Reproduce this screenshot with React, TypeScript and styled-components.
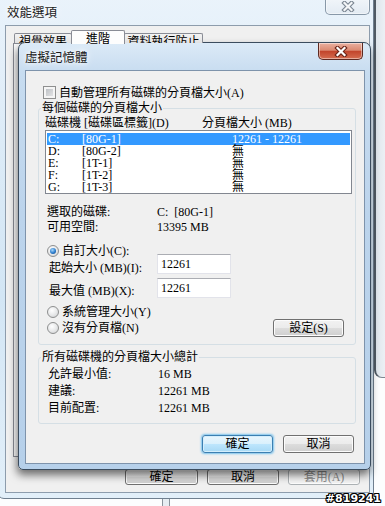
import React from "react";
import styled, { createGlobalStyle } from "styled-components";

const GlobalStyle = createGlobalStyle`
  html, body {
    margin: 0;
    padding: 0;
    background: #fcfdfe;
  }
  * { box-sizing: border-box; }
`;

const SERIF = `"Liberation Serif", "Noto Sans CJK TC", serif`;
const SANS = `"Noto Sans CJK TC", "Noto Sans", sans-serif`;

const Desktop = styled.div`
  position: relative;
  width: 385px;
  height: 506px;
  overflow: hidden;
  background: #fcfdfe;
  font-family: ${SERIF};
  font-size: 12px;
  line-height: 12px;
  color: #000;
`;

// window further behind, only its edge shows on the right
const FarWindowEdge = styled.div`
  position: absolute;
  left: 374px;
  top: -10px;
  width: 30px;
  height: 388px;
  border-left: 2px solid #4f5963;
  border-bottom: 1px solid #7d8790;
  border-bottom-left-radius: 8px;
  background: linear-gradient(90deg, #dfe6ec, #f7f9fb 60%);
`;

const DesktopSliver = styled.div`
  position: absolute;
  left: 162px;
  top: 498px;
  width: 8px;
  height: 12px;
  border-left: 1px solid #8a949c;
  border-right: 1px solid #8a949c;
  background: #e6edf2;
`;

const BackWindow = styled.div`
  position: absolute;
  left: -3px;
  top: -8px;
  width: 377px;
  height: 507px;
  border: 1px solid #6f7f8f;
  border-radius: 7px;
  background: linear-gradient(180deg, #eaf3fb 0%, #dcebf7 30%, #d3e6f5 60%, #e2eff9 100%);
  padding: 0 3px 5px 7px;
  display: flex;
  flex-direction: column;
`;

const TitleBar = styled.div<{ $height: number }>`
  height: ${p => p.$height}px;
  display: flex;
  align-items: flex-start;
  flex-shrink: 0;
`;

const TitleText = styled.div<{ $top: number; $left: number }>`
  padding-top: ${p => p.$top}px;
  padding-left: ${p => p.$left}px;
  font-family: ${SANS};
  font-size: 12.5px;
  line-height: 13px;
  color: #1b1b1b;
  text-shadow: 0 0 4px #fff, 0 0 8px #fff;
`;

const CloseButton = styled.div<{ $active?: boolean; $height: number; $right: number }>`
  margin-left: auto;
  margin-right: ${p => p.$right}px;
  width: 45px;
  height: ${p => p.$height}px;
  display: flex;
  align-items: flex-end;
  justify-content: center;
  padding-bottom: 2px;
  border: 1px solid ${p => (p.$active ? "#5d2a22" : "#8898a8")};
  border-top: none;
  border-radius: 0 0 5px 5px;
  background: ${p =>
    p.$active
      ? "linear-gradient(180deg, #eab0a0 0%, #db8a72 45%, #c2452c 52%, #d56d50 100%)"
      : "linear-gradient(180deg, #f6f9fc, #e3ebf3)"};
  box-shadow: inset 0 0 0 1px rgba(255, 255, 255, 0.45);
`;

const CloseGlyph = ({ fill, stroke }: { fill: string; stroke: string }) => (
  <svg width="14" height="11" viewBox="0 0 14 11">
    <path d="M3.5 2 L10.5 9 M10.5 2 L3.5 9" stroke={stroke} strokeWidth="4.4" strokeLinecap="square" />
    <path d="M3.5 2 L10.5 9 M10.5 2 L3.5 9" stroke={fill} strokeWidth="2.2" strokeLinecap="square" />
  </svg>
);

const BackClient = styled.div`
  flex: 1;
  background: #f0f0f0;
  border: 1px solid #8d9cac;
  padding: 5px 9px 0 7px;
  display: flex;
  flex-direction: column;
`;

const TabStrip = styled.div`
  display: flex;
  align-items: flex-end;
  height: 12px;
  padding-left: 2px;
  position: relative;
  z-index: 1;
`;

const Tab = styled.div<{ $selected?: boolean; $width: number }>`
  width: ${p => p.$width}px;
  height: ${p => (p.$selected ? 14 : 10)}px;
  margin-bottom: ${p => (p.$selected ? -1 : 0)}px;
  margin-left: -1px;
  border: 1px solid #898c95;
  border-bottom: none;
  border-radius: 2px 2px 0 0;
  background: ${p => (p.$selected ? "#fdfdfd" : "linear-gradient(180deg, #f3f3f3, #e2e2e2)")};
  text-align: center;
  padding-top: 2px;
  white-space: nowrap;
  overflow: hidden;
`;

const TabPanel = styled.div`
  height: 414px;
  border: 1px solid #898c95;
  background: #fdfdfd;
`;

const ButtonRow = styled.div<{ $top: number; $gap: number; $right: number }>`
  display: flex;
  justify-content: flex-end;
  gap: ${p => p.$gap}px;
  margin-top: ${p => p.$top}px;
  margin-right: ${p => p.$right}px;
`;

const Button = styled.div<{ $width: number; $height: number; $default?: boolean; $disabled?: boolean }>`
  width: ${p => p.$width}px;
  height: ${p => p.$height}px;
  display: flex;
  align-items: center;
  justify-content: center;
  border: 1px solid ${p => (p.$default ? "#3c7fb1" : p.$disabled ? "#adb2b5" : "#707070")};
  border-radius: 3px;
  background: ${p =>
    p.$default
      ? "linear-gradient(180deg, #eaf6fd 0%, #d9f0fc 50%, #bee6fd 50%, #a7d9f5 100%)"
      : p.$disabled
      ? "#f4f4f4"
      : "linear-gradient(180deg, #f2f2f2 0%, #ebebeb 50%, #dddddd 50%, #cfcfcf 100%)"};
  box-shadow: ${p => (p.$default ? "0 0 2px 1px #7cc4ee, inset 0 0 0 1px #d4eefc" : "inset 0 0 0 1px #fcfcfc")};
  color: ${p => (p.$disabled ? "#8a8a8a" : "#000")};
  font-family: ${SERIF};
  font-size: 12px;
  line-height: 12px;
`;

const Dialog = styled.div`
  position: absolute;
  left: 18px;
  top: 42px;
  width: 353px;
  height: 428px;
  border: 1px solid #3b4c5e;
  border-radius: 7px 7px 5px 5px;
  background: linear-gradient(180deg, #dceaf7 0%, #c7dcf0 7%, #bcd4ec 40%, #b6d0ea 100%);
  box-shadow: -1px 5px 9px rgba(0, 0, 0, 0.55);
  padding: 0 5px 5px 6px;
  display: flex;
  flex-direction: column;
`;

const Client = styled.div`
  flex: 1;
  background: #f0f0f0;
  border: 1px solid #7e93ab;
  padding: 0 8px 0 12px;
  display: flex;
  flex-direction: column;
`;

const OptionRow = styled.div<{ $top: number; $left: number; $height?: number }>`
  display: flex;
  align-items: center;
  gap: 3px;
  height: ${p => p.$height ?? 12}px;
  margin-top: ${p => p.$top}px;
  margin-left: ${p => p.$left}px;
  white-space: nowrap;
`;

const CheckBox = styled.span`
  width: 13px;
  height: 13px;
  flex-shrink: 0;
  border: 1px solid #8e8f8f;
  background: linear-gradient(135deg, #b4b8bd, #ececed);
  box-shadow: inset 0 0 0 2px #f5f5f5;
`;

const Radio = styled.span<{ $checked?: boolean }>`
  width: 12px;
  height: 12px;
  flex-shrink: 0;
  border-radius: 50%;
  border: 1px solid #8e8f8f;
  background: radial-gradient(circle at 40% 35%, #ffffff 0%, #e6e7e8 55%, #c9cbcd 100%);
  display: flex;
  align-items: center;
  justify-content: center;
  &::after {
    content: "";
    display: ${p => (p.$checked ? "block" : "none")};
    width: 6px;
    height: 6px;
    border-radius: 50%;
    background: radial-gradient(circle at 40% 35%, #a8d8fb 0%, #2a7bcc 55%, #0d3e7a 100%);
  }
`;

const Group = styled.fieldset<{ $top: number }>`
  margin: ${p => p.$top}px 0 0 0;
  padding: 0;
  border: 1px solid #d5dfe5;
  border-radius: 3px;
  min-width: 0;
`;

const Legend = styled.legend`
  margin-left: 2px;
  padding: 0 1px;
  font-size: 12px;
  line-height: 12px;
`;

const GroupBody = styled.div<{ $pad: string }>`
  padding: ${p => p.$pad};
  display: flex;
  flex-direction: column;
`;

const ColumnHeader = styled.div`
  display: grid;
  grid-template-columns: 157px 1fr;
  height: 12px;
  margin-bottom: 1px;
  white-space: nowrap;
`;

const ListBox = styled.div`
  width: 307px;
  height: 64px;
  border: 1px solid #828790;
  background: #fff;
  padding-top: 2px;
`;

const DriveRow = styled.div<{ $selected?: boolean }>`
  display: grid;
  grid-template-columns: 34px 150px 1fr;
  height: 12px;
  margin: 0 1px;
  padding-left: 1px;
  white-space: pre;
  background: ${p => (p.$selected ? "#3399ff" : "transparent")};
  color: ${p => (p.$selected ? "#fff" : "#000")};
`;

const InfoRow = styled.div<{ $left: number; $height: number; $top?: number }>`
  display: grid;
  grid-template-columns: 110px 1fr;
  height: ${p => p.$height}px;
  margin-left: ${p => p.$left}px;
  margin-top: ${p => p.$top ?? 0}px;
  white-space: pre;
`;

const FieldRow = styled.div<{ $top: number; $labelTop: number }>`
  display: grid;
  grid-template-columns: 108px 74px;
  margin-left: 4px;
  margin-top: ${p => p.$top}px;
  white-space: nowrap;
  & > span {
    padding-top: ${p => p.$labelTop}px;
  }
`;

const TextBox = styled.div`
  width: 74px;
  height: 20px;
  background: #fff;
  border: 1px solid #e2e3ea;
  border-top-color: #abadb3;
  padding: 3px 0 0 3px;
`;

const drives = [
  { d: "C:", label: "[80G-1]", size: "12261 - 12261", selected: true },
  { d: "D:", label: "[80G-2]", size: "無" },
  { d: "E:", label: "[1T-1]", size: "無" },
  { d: "F:", label: "[1T-2]", size: "無" },
  { d: "G:", label: "[1T-3]", size: "無" },
];

const Watermark = styled.div`
  position: absolute;
  right: 4px;
  bottom: 1px;
  font-family: "DejaVu Sans", sans-serif;
  font-weight: bold;
  font-size: 11px;
  line-height: 12px;
  color: #fff;
  text-shadow: -1px 0 #000, 1px 0 #000, 0 -1px #000, 0 1px #000, -1px -1px #000, 1px 1px #000,
    -1px 1px #000, 1px -1px #000;
`;

export default function App() {
  return (
    <Desktop>
      <GlobalStyle />
      <FarWindowEdge />
      <DesktopSliver />

      <BackWindow>
        <TitleBar $height={32}>
          <TitleText $top={12} $left={2}>效能選項</TitleText>
          <CloseButton $height={22} $right={0}>
            <CloseGlyph fill="#f4f6f8" stroke="#7c8793" />
          </CloseButton>
        </TitleBar>
        <BackClient>
          <TabStrip>
            <Tab $width={58}>視覺效果</Tab>
            <Tab $width={54} $selected>進階</Tab>
            <Tab $width={79}>資料執行防止</Tab>
          </TabStrip>
          <TabPanel />
          <ButtonRow $top={12} $gap={9} $right={0}>
            <Button $width={73} $height={16}>確定</Button>
            <Button $width={72} $height={16}>取消</Button>
            <Button $width={72} $height={16} $disabled>套用(A)</Button>
          </ButtonRow>
        </BackClient>
      </BackWindow>

      <Dialog>
        <TitleBar $height={27}>
          <TitleText $top={7} $left={0}>虛擬記憶體</TitleText>
          <CloseButton $active $height={17} $right={2}>
            <CloseGlyph fill="#ffffff" stroke="#6a2418" />
          </CloseButton>
        </TitleBar>
        <Client>
          <OptionRow $top={15} $left={5} $height={13}>
            <CheckBox />
            <span>自動管理所有磁碟的分頁檔大小(A)</span>
          </OptionRow>

          <Group $top={3}>
            <Legend>每個磁碟的分頁檔大小</Legend>
            <GroupBody $pad="3px 0 7px 6px">
              <ColumnHeader>
                <span>磁碟機 [磁碟區標籤](D)</span>
                <span>分頁檔大小 (MB)</span>
              </ColumnHeader>
              <ListBox>
                {drives.map(r => (
                  <DriveRow key={r.d} $selected={r.selected}>
                    <span>{r.d}</span>
                    <span>{r.label}</span>
                    <span>{r.size}</span>
                  </DriveRow>
                ))}
              </ListBox>

              <InfoRow $left={2} $height={15} $top={12}>
                <span>選取的磁碟:</span>
                <span>C:  [80G-1]</span>
              </InfoRow>
              <InfoRow $left={2} $height={15}>
                <span>可用空間:</span>
                <span>13395 MB</span>
              </InfoRow>

              <OptionRow $top={9} $left={2}>
                <Radio $checked />
                <span>自訂大小(C):</span>
              </OptionRow>
              <FieldRow $top={-3} $labelTop={8}>
                <span>起始大小 (MB)(I):</span>
                <TextBox>12261</TextBox>
              </FieldRow>
              <FieldRow $top={4} $labelTop={7}>
                <span>最大值 (MB)(X):</span>
                <TextBox>12261</TextBox>
              </FieldRow>

              <OptionRow $top={8} $left={2}>
                <Radio />
                <span>系統管理大小(Y)</span>
              </OptionRow>
              <OptionRow $top={1} $left={2} $height={18}>
                <Radio />
                <span>沒有分頁檔(N)</span>
                <ButtonRow $top={0} $gap={0} $right={11} style={{ flex: 1 }}>
                  <Button $width={71} $height={18}>設定(S)</Button>
                </ButtonRow>
              </OptionRow>
            </GroupBody>
          </Group>

          <Group $top={6}>
            <Legend>所有磁碟機的分頁檔大小總計</Legend>
            <GroupBody $pad="5px 0 4px 9px">
              <InfoRow $left={0} $height={17}>
                <span>允許最小值:</span>
                <span>16 MB</span>
              </InfoRow>
              <InfoRow $left={0} $height={17}>
                <span>建議:</span>
                <span>12261 MB</span>
              </InfoRow>
              <InfoRow $left={0} $height={17}>
                <span>目前配置:</span>
                <span>12261 MB</span>
              </InfoRow>
            </GroupBody>
          </Group>

          <ButtonRow $top={11} $gap={10} $right={2}>
            <Button $width={71} $height={18} $default>確定</Button>
            <Button $width={71} $height={18}>取消</Button>
          </ButtonRow>
        </Client>
      </Dialog>

      <Watermark>#819241</Watermark>
    </Desktop>
  );
}
